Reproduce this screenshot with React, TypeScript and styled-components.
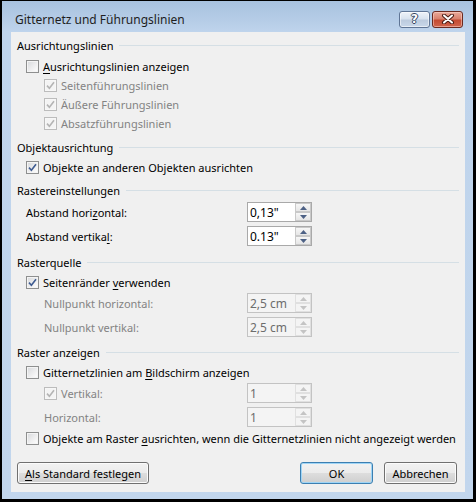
import React from 'react';
import styled, { createGlobalStyle, css } from 'styled-components';

const Global = createGlobalStyle`
  html, body { margin: 0; padding: 0; background: #000; }
  body { font-family: "Noto Sans", "Segoe UI", sans-serif; font-size: 11px; color: #000; }
  * { box-sizing: border-box; }
`;

const Screen = styled.div`
  width: 476px;
  height: 502px;
  background: #000;
  padding: 1px 0 0 2px;
  overflow: hidden;
`;

const Window = styled.div`
  width: 471px;
  height: 498px;
  display: flex;
  flex-direction: column;
  background: linear-gradient(to bottom, #a8c2df 0px, #b6cde7 20px, #bfd4ec 31px, #c2d6ed 100%);
  padding: 0 8px 7px 9px;
`;

const TitleBar = styled.div`
  height: 31px;
  display: flex;
  align-items: center;
  padding-top: 7px;
`;

const Title = styled.div`
  flex: 1;
  margin-left: 4px;
  font-size: 12px;
  color: #1e1e1e;
  margin-top: -2px;
`;

const CaptionButton = styled.div<{ $close?: boolean }>`
  width: 31px;
  height: 17px;
  border-radius: 3px;
  display: flex;
  align-items: center;
  justify-content: center;
  margin-top: -2px;
  ${(p) =>
    p.$close
      ? css`
          margin-left: 2px;
          margin-right: 2px;
          border: 1px solid #6b2a20;
          background: linear-gradient(to bottom, #e9a99a 0%, #d9826e 45%, #c44b32 55%, #d0654d 100%);
          box-shadow: inset 0 0 0 1px rgba(255, 220, 210, 0.5);
        `
      : css`
          border: 1px solid #5f7595;
          background: linear-gradient(to bottom, #eef3f9 0%, #d9e3ef 45%, #bccbde 55%, #c9d8ea 100%);
          box-shadow: inset 0 0 0 1px rgba(255, 255, 255, 0.55);
        `}
`;

const HelpGlyph = styled.span`
  font-family: "DejaVu Sans", sans-serif;
  font-weight: bold;
  font-size: 12px;
  line-height: 1;
  color: #fff;
  text-shadow: 1px 0 0 #34465f, -1px 0 0 #34465f, 0 1px 0 #34465f, 0 -1px 0 #34465f;
`;

const Panel = styled.div`
  flex: 1;
  background: #f0f0f0;
  display: flex;
  flex-direction: column;
  padding-top: 3px;
`;

const Header = styled.div<{ $mt?: number }>`
  height: 20px;
  margin-top: ${(p) => p.$mt ?? 0}px;
  display: flex;
  align-items: center;
  gap: 6px;
  padding: 0 6px;
  &::after {
    content: '';
    flex: 1;
    height: 1px;
    background: #d5dfe5;
  }
`;

const CheckRow = styled.div<{ $indent: number; $h?: number; $mt?: number; $disabled?: boolean }>`
  height: ${(p) => p.$h ?? 20}px;
  margin-top: ${(p) => p.$mt ?? 0}px;
  padding-left: ${(p) => p.$indent}px;
  display: flex;
  align-items: center;
  gap: 4px;
  color: ${(p) => (p.$disabled ? '#838383' : '#000')};
`;

const Box = styled.span<{ $disabled?: boolean }>`
  width: 13px;
  height: 13px;
  flex: none;
  display: flex;
  align-items: center;
  justify-content: center;
  border: 1px solid ${(p) => (p.$disabled ? '#bcbcbc' : '#8e8f8f')};
  background: ${(p) =>
    p.$disabled ? '#f4f4f4' : 'linear-gradient(135deg, #d6d8db 0%, #eeeeef 55%, #ffffff 100%)'};
  box-shadow: inset 0 0 0 1px ${(p) => (p.$disabled ? '#f7f7f7' : '#f4f4f4')};
`;

const Under = styled.span`
  text-decoration: underline;
  text-underline-offset: 2px;
`;

const FieldRow = styled.div<{ $indent: number; $mt?: number; $disabled?: boolean }>`
  width: 295px;
  height: 20px;
  margin-left: 6px;
  margin-top: ${(p) => p.$mt ?? 0}px;
  padding-left: ${(p) => p.$indent}px;
  display: grid;
  grid-template-columns: 1fr 65px;
  align-items: center;
  color: ${(p) => (p.$disabled ? '#838383' : '#000')};
`;

const LabelWithBox = styled.span`
  display: flex;
  align-items: center;
  gap: 4px;
`;

const SpinBox = styled.div<{ $disabled?: boolean }>`
  height: 20px;
  border: 1px solid ${(p) => (p.$disabled ? '#c3c3c3' : '#a9a9a9')};
  background: ${(p) => (p.$disabled ? '#f4f4f4' : '#fff')};
  display: flex;
  align-items: center;
  color: ${(p) => (p.$disabled ? '#6d6d6d' : '#000')};
`;

const SpinValue = styled.span`
  flex: 1;
  padding-left: 2px;
  font-size: 12px;
`;

const SpinButtons = styled.div`
  width: 16px;
  height: 18px;
  display: flex;
  flex-direction: column;
`;

const SpinBtn = styled.div<{ $disabled?: boolean }>`
  flex: 1;
  display: flex;
  align-items: center;
  justify-content: center;
  border: 1px solid ${(p) => (p.$disabled ? '#e0e0e0' : '#c9c9c9')};
  background: ${(p) =>
    p.$disabled ? '#f4f4f4' : 'linear-gradient(to bottom, #f7f7f7, #e6e6e6)'};
`;

const Footer = styled.div`
  margin-top: auto;
  padding: 0 8px 8px 6px;
  display: flex;
  justify-content: space-between;
`;

const ButtonGroup = styled.div`
  display: flex;
  gap: 11px;
`;

const Button = styled.div<{ $w: number; $default?: boolean }>`
  width: ${(p) => p.$w}px;
  height: 22px;
  border-radius: 3px;
  display: flex;
  align-items: center;
  justify-content: center;
  border: 1px solid ${(p) => (p.$default ? '#3c7fb1' : '#707070')};
  background: linear-gradient(to bottom, #f2f2f2 0%, #ebebeb 50%, #dddddd 51%, #cfcfcf 100%);
  box-shadow: inset 0 0 0 1px ${(p) => (p.$default ? '#9fd5f6' : '#fbfbfb')};
  color: #000;
`;

const Check = ({ disabled }: { disabled?: boolean }) => (
  <svg width="9" height="9" viewBox="0 0 9 9">
    <path
      d="M1 4.6 L3.4 7.2 L8 1.2"
      fill="none"
      stroke={disabled ? '#b4b4b4' : '#3e5b91'}
      strokeWidth="1.6"
      strokeLinejoin="miter"
    />
  </svg>
);

const CheckBox = ({ checked, disabled }: { checked?: boolean; disabled?: boolean }) => (
  <Box $disabled={disabled}>{checked && <Check disabled={disabled} />}</Box>
);

const Arrow = ({ up, disabled }: { up?: boolean; disabled?: boolean }) => (
  <svg width="7" height="4" viewBox="0 0 7 4">
    <path d={up ? 'M0 4 L3.5 0 L7 4 Z' : 'M0 0 L3.5 4 L7 0 Z'} fill={disabled ? '#c4c4c4' : '#4d6185'} />
  </svg>
);

const Spin = ({ value, disabled }: { value: string; disabled?: boolean }) => (
  <SpinBox $disabled={disabled}>
    <SpinValue>{value}</SpinValue>
    <SpinButtons>
      <SpinBtn $disabled={disabled}>
        <Arrow up disabled={disabled} />
      </SpinBtn>
      <SpinBtn $disabled={disabled}>
        <Arrow disabled={disabled} />
      </SpinBtn>
    </SpinButtons>
  </SpinBox>
);

const CloseGlyph = () => (
  <svg width="14" height="10" viewBox="0 0 14 10">
    <path d="M3 1.5 L11 8.5 M11 1.5 L3 8.5" stroke="#4a1c14" strokeWidth="4" strokeLinecap="round" />
    <path d="M3 1.5 L11 8.5 M11 1.5 L3 8.5" stroke="#ffffff" strokeWidth="2" strokeLinecap="round" />
  </svg>
);

export default function App() {
  return (
    <Screen>
      <Global />
      <Window>
        <TitleBar>
          <Title>Gitternetz und Führungslinien</Title>
          <CaptionButton>
            <HelpGlyph>?</HelpGlyph>
          </CaptionButton>
          <CaptionButton $close>
            <CloseGlyph />
          </CaptionButton>
        </TitleBar>
        <Panel>
          <Header>Ausrichtungslinien</Header>
          <CheckRow $indent={15} $mt={1}>
            <CheckBox />
            <span>
              <Under>A</Under>usrichtungslinien anzeigen
            </span>
          </CheckRow>
          <CheckRow $indent={33} $h={19} $disabled>
            <CheckBox checked disabled />
            <span>Seitenführungslinien</span>
          </CheckRow>
          <CheckRow $indent={33} $h={19} $disabled>
            <CheckBox checked disabled />
            <span>Äußere Führungslinien</span>
          </CheckRow>
          <CheckRow $indent={33} $h={19} $disabled>
            <CheckBox checked disabled />
            <span>Absatzführungslinien</span>
          </CheckRow>

          <Header $mt={4}>Objektausrichtung</Header>
          <CheckRow $indent={15}>
            <CheckBox checked />
            <span>Objekte an anderen Objekten ausrichten</span>
          </CheckRow>

          <Header $mt={3}>Rastereinstellungen</Header>
          <FieldRow $indent={9} $mt={2}>
            <span>
              Abstand hori<Under>z</Under>ontal:
            </span>
            <Spin value={'0,13"'} />
          </FieldRow>
          <FieldRow $indent={9} $mt={4}>
            <span>
              Abstand vertika<Under>l</Under>:
            </span>
            <Spin value={'0.13"'} />
          </FieldRow>

          <Header $mt={6}>Rasterquelle</Header>
          <CheckRow $indent={15}>
            <CheckBox checked />
            <span>
              Seitenränder <Under>v</Under>erwenden
            </span>
          </CheckRow>
          <FieldRow $indent={27} $mt={1} $disabled>
            <span>Nullpunkt horizontal:</span>
            <Spin value="2,5 cm" disabled />
          </FieldRow>
          <FieldRow $indent={27} $mt={4} $disabled>
            <span>Nullpunkt vertikal:</span>
            <Spin value="2,5 cm" disabled />
          </FieldRow>

          <Header $mt={5}>Raster anzeigen</Header>
          <CheckRow $indent={15}>
            <CheckBox />
            <span>
              Gitternetzlinien am <Under>B</Under>ildschirm anzeigen
            </span>
          </CheckRow>
          <FieldRow $indent={27} $mt={1} $disabled>
            <LabelWithBox>
              <CheckBox checked disabled />
              Vertikal:
            </LabelWithBox>
            <Spin value="1" disabled />
          </FieldRow>
          <FieldRow $indent={27} $mt={4} $disabled>
            <span>Horizontal:</span>
            <Spin value="1" disabled />
          </FieldRow>
          <CheckRow $indent={15} $mt={1}>
            <CheckBox />
            <span>
              Objekte am Raster <Under>a</Under>usrichten, wenn die Gitternetzlinien nicht angezeigt werden
            </span>
          </CheckRow>

          <Footer>
            <Button $w={132}>
              <span>
                <Under>A</Under>ls Standard festlegen
              </span>
            </Button>
            <ButtonGroup>
              <Button $w={73} $default>
                OK
              </Button>
              <Button $w={73}>Abbrechen</Button>
            </ButtonGroup>
          </Footer>
        </Panel>
      </Window>
    </Screen>
  );
}
